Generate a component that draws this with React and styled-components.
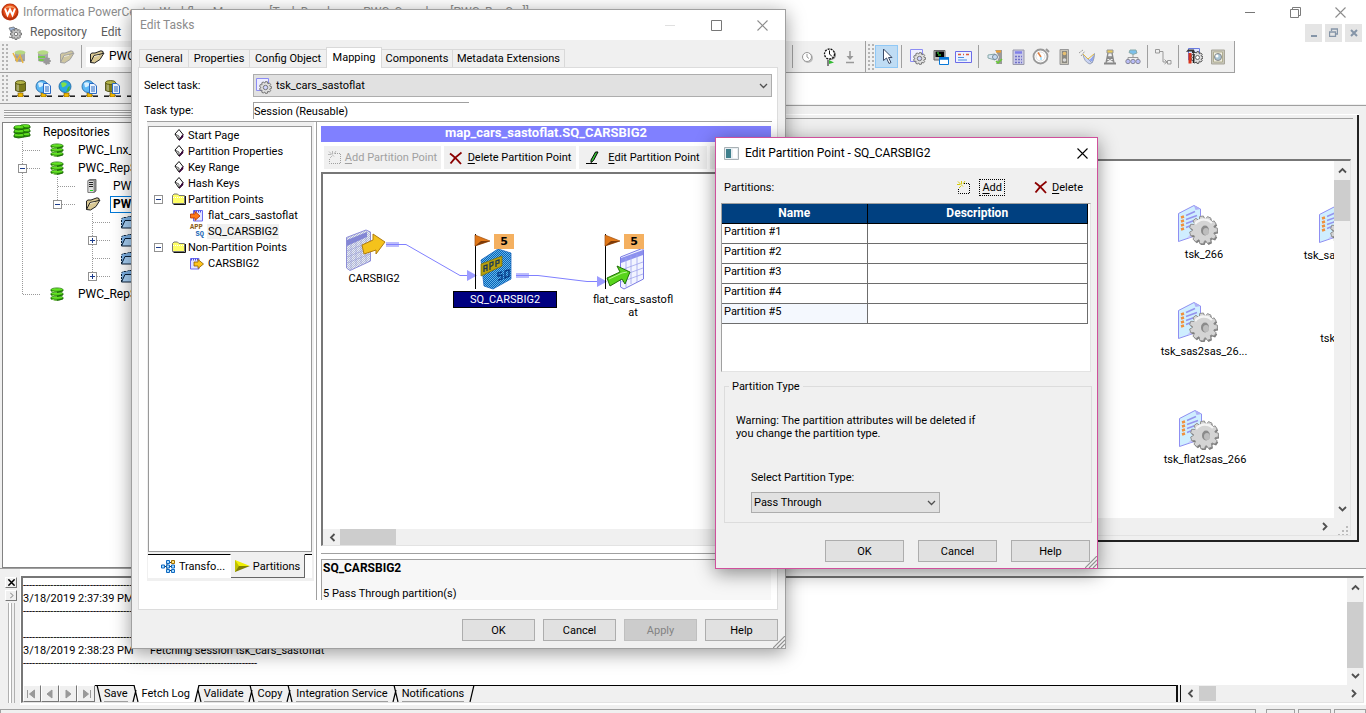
import React from 'react';
import styled, { createGlobalStyle, css } from 'styled-components';

const GlobalStyle = createGlobalStyle`
  *, *::before, *::after { box-sizing: border-box; }
  body {
    margin: 0;
    background: #fff;
    color: #000;
    font: 11px/13px Roboto, "Liberation Sans", sans-serif;
    overflow: hidden;
  }
  button, select, input { font: inherit; color: inherit; }
  button { padding: 0; border: 0; background: none; white-space: nowrap; }
  svg { display: block; flex: none; }
  u { text-underline-offset: 2px; }
`;

const FACE = '#f0f0f0';
const SHADE = '#a0a0a0';

/* ---------- drawings ---------- */

function gearPath(cx, cy, outer, inner, teeth, squash = 1) {
  const pts = [];
  const step = (Math.PI * 2) / teeth;
  for (let i = 0; i < teeth; i += 1) {
    const a = i * step;
    [[-0.42, inner], [-0.24, outer], [0.24, outer], [0.42, inner]].forEach(([k, r]) => {
      const x = cx + Math.cos(a + k * step) * r * squash;
      const y = cy + Math.sin(a + k * step) * r;
      pts.push(`${x.toFixed(2)} ${y.toFixed(2)}`);
    });
  }
  return `M${pts.join('L')}Z`;
}

const Svg = ({ w = 16, h = w, children, ...rest }) => (
  <svg width={w} height={h} viewBox={`0 0 ${w} ${h}`} fill="none" aria-hidden="true" {...rest}>
    {children}
  </svg>
);

const Logo = () => (
  <Svg w={18}>
    <circle cx="9" cy="9" r="8.5" fill="#b8310c" />
    <circle cx="9" cy="8" r="6.8" fill="#e8501a" />
    <path d="M3 5.5Q9 0 15 5.5Q9 3.500 3 5.500Z" fill="#f7a36a" />
    <path d="M4 5.500L6.500 12L9 6.500L11.500 12L14 5.500" stroke="#fff" strokeWidth="2" />
  </Svg>
);

const GearMini = () => (
  <Svg w={14}>
    <path d="M1 2L6 1L8 4L3 6Z" fill="#9db4d8" stroke="#666" strokeWidth=".7" />
    <path d={gearPath(8, 8, 5.5, 4, 8)} fill="#c4c4c4" stroke="#555" strokeWidth=".8" />
    <circle cx="8" cy="8" r="1.700" fill="#fff" stroke="#555" strokeWidth=".7" />
    <path d="M1 11L5 12" stroke="#777" />
  </Svg>
);

const Cylinder = ({ x = 0, y = 0, top, side, edge }) => (
  <g transform={`translate(${x} ${y})`}>
    <path d="M.5 2.500V10.500Q5.500 13.500 10.500 10.500V2.500Z" fill={side} stroke={edge} strokeWidth=".8" />
    <path d="M1.500 3V10.500L4 11.300V4Z" fill="#fff" opacity=".35" />
    <ellipse cx="5.500" cy="2.500" rx="5" ry="2" fill={top} stroke={edge} strokeWidth=".8" />
  </g>
);

const GreenDb = () => (
  <Svg w={14}>
    {[9, 5, 1].map((y) => (
      <g key={y}>
        <path d={`M1 ${y + 2}V${y + 3}Q7 ${y + 6} 13 ${y + 3}V${y + 2}Z`} fill="#2f9d0c" stroke="#145c02" strokeWidth=".8" />
        <path d={`M2 ${y + 3}Q4 ${y + 4} 7 ${y + 4}`} stroke="#b6ff7a" />
        <ellipse cx="7" cy={y + 1.6} rx="6" ry="1.700" fill="#62e321" stroke="#1b7304" strokeWidth=".7" />
      </g>
    ))}
  </Svg>
);

const GreenDbGroup = () => (
  <Svg w={18} h={16}>
    {[[6, 0], [0, 1]].map(([x, dy]) => [9, 5, 1].map((y) => (
      <g key={`${x}-${y}`} transform={`translate(${x} ${dy})`}>
        <path d={`M1 ${y + 1}V${y + 3}Q5 ${y + 5} 11 ${y + 3}V${y + 1}Z`} fill="#2f9d0c" stroke="#145c02" strokeWidth=".8" />
        <ellipse cx="6" cy={y + 1} rx="5" ry="1.600" fill="#62e321" stroke="#1b7304" strokeWidth=".6" />
      </g>
    )))}
  </Svg>
);

const Server = () => (
  <Svg w={14}>
    <path d="M3 1.500L5 .500H11V12L9 13.500H3Z" fill="#9a9a9a" stroke="#555" strokeWidth=".8" />
    <path d="M3 1.500H9V13.500H3Z" fill="#dcdcdc" stroke="#666" strokeWidth=".6" />
    <path d="M4 3.500H8M4 5.500H8M4 7.500H8" stroke="#222" />
    <path d="M5 11.500H8" stroke="#1fe01f" />
  </Svg>
);

const OpenFolder = ({ fill = '#d9c893', line = '#222' }) => (
  <Svg w={16} h={14}>
    <path d="M1.500 12.500V4L3 3H6L12 .800L14 1.500V4" fill={fill} stroke={line} />
    <path d="M1.500 12.500L5 5.500L10 4.500L15 3L11 9.500L5.500 13Z" fill={fill} stroke={line} />
    <path d="M5 6.500L10 5.300" stroke="#fff" opacity=".6" />
  </Svg>
);

const BlueFolder = () => (
  <Svg w={16} h={14}>
    <path d="M1.500 13V4L3 2.500H7L8 1.500H15" fill="#7fb4e8" stroke="#0a2038" strokeDasharray="2 1" />
    <path d="M1.500 13L5 5.500H16V13Z" fill="#a9d2f7" stroke="#0a2038" />
  </Svg>
);

const YellowFolder = () => (
  <Svg w={14} h={12}>
    <path d="M.500 10.500V2.500L2 1H5.500L7 2.500H12.500V10.500Z" fill="#ffff66" stroke="#777" />
    <path d="M1 4.500H12" stroke="#fff" strokeDasharray="1 1" />
    <path d="M1.500 11.500H13.500V3" stroke="#111" />
  </Svg>
);

const PageMark = () => (
  <Svg w={10} h={12}>
    <path d="M1 5L5 .500L9 5.500L5 11Z" fill="#fff" stroke="#111" />
    <path d="M5 11L9 5.500V8L5.500 11.500Z" fill="#400040" stroke="#300030" strokeWidth=".6" />
    <path d="M1 5L5 7V11Z" fill="#ddd" stroke="#111" strokeWidth=".6" />
  </Svg>
);

const SheetArrow = ({ arrow, edge, flip }) => (
  <Svg w={14} h={13}>
    <path d={flip ? 'M.500 1.500H9V12H.500Z' : 'M3.500 1.500H12.500V12H3.500Z'} fill="#e4e4ff" stroke="#6a6af0" />
    <path d={flip ? 'M1 2.500H9' : 'M4 2.500H12'} stroke="#4a4ae0" strokeWidth="2" strokeDasharray="1 1" />
    <path d={flip ? 'M4 5H8V2.500L13.500 7L8 11.500V9H4Z' : 'M.500 5H5V2.500L10 7L5 11.500V9H.500Z'} fill={arrow} stroke={edge} strokeWidth=".8" />
  </Svg>
);

const AppSqWrap = styled.span`
  display: flex;
  flex-direction: column;
  width: 14px;
  font: bold 7px/7px "Liberation Mono", monospace;
  color: #8a5a14;
  & > i { font-style: normal; align-self: flex-end; color: #1464b4; }
`;
const AppSq = () => <AppSqWrap aria-hidden="true">APP<i>SQ</i></AppSqWrap>;

const TaskGear = ({ size = 16 }) => (
  <svg width={size} height={size} viewBox="0 0 16 16" fill="none" aria-hidden="true">
    <path d="M.500 .500H12.500V12.500H.500Z" fill="#eef" stroke="#8c8cf4" />
    <path d={gearPath(9.5, 9.5, 6, 4.6, 9)} fill="#dedede" stroke="#6b6b6b" strokeWidth=".9" />
    <circle cx="9.500" cy="9.500" r="2.200" fill="#cfd4ff" stroke="#777" />
  </svg>
);

const SessionTask = () => (
  <Svg w={41} h={41}>
    <path d="M1.500 9.500L17 1.500L23.500 5V30L1.500 37.500Z" fill="#cfeeff" stroke="#8f8ff2" />
    <path d="M10 34L23 20V31Z" fill="#c6c6fb" />
    <path d="M17 1.500L18.500 6L23.500 5Z" fill="#aeb0f6" />
    <path d="M9 11.500L18 7.500M9 15.500L20 11.500M9 19.500L20 15.500M9 23.500L15 21" stroke="#9494ee" strokeWidth="1.500" />
    <path d="M4 13.500L7 12.500M4 17.500L7 16.500M4 21.500L7 20.500M4 25.500L7 24.500" stroke="#f0903c" strokeWidth="2.400" />
    <path d={gearPath(27.5, 27.5, 14, 11, 11)} fill="#7d7d7d" />
    <path d={gearPath(26.5, 26, 14, 11, 11)} fill="#d4d4d4" stroke="#909090" />
    <path d="M18 20A11 11 0 0 1 35 19" stroke="#f4f4f4" strokeWidth="2.500" />
    <ellipse cx="28" cy="26.500" rx="4" ry="5" fill="#8b8b8b" />
    <ellipse cx="29" cy="27.500" rx="3" ry="3.500" fill="#bdbdbd" />
  </Svg>
);

const NetDb = ({ kind }) => (
  <Svg w={17} h={17}>
    <path d="M0 15.500H17" stroke="#777" strokeWidth="1" />
    <path d="M0 16.500H5M12 16.500H17" stroke="#222" />
    <rect x="6" y="13" width="5" height="4" fill="#f2b800" stroke="#6b5200" strokeWidth=".6" />
    {kind === 'db' && <Cylinder x={3} y={0} top="#b5b548" side="#7c7c1c" edge="#44440a" />}
    {kind === 'dbpage' && <Cylinder x={1} y={0} top="#b5b548" side="#7c7c1c" edge="#44440a" />}
    {kind.startsWith('globe') && (
      <g>
        <circle cx="7" cy="6.500" r="6" fill={kind === 'globe' ? '#2aa7e0' : '#5cb8f5'} stroke="#1a5fa0" strokeWidth=".8" />
        <path d="M3 3Q7 1 9 4Q7 8 4 7Z" fill={kind === 'globe' ? '#7ee04c' : '#d8f0ff'} />
        {kind === 'globe' && <path d="M10 7L12 6L11 11L8 12Z" fill="#3fb83a" />}
      </g>
    )}
    {kind.includes('page') && (
      <path d="M8.500 3.500H13L15.500 6V13.500H8.500Z M10 7H14M10 9H14M10 11H14" fill="#eaf4ff" stroke="#2b6bc4" />
    )}
  </Svg>
);

const DisabledDb = ({ kind }) => (
  <Svg w={17} h={16}>
    <path d="M3 3V12Q8 14 13 12V3Z" fill="#a8a8a8" />
    <ellipse cx="8" cy="3.500" rx="5.500" ry="2.200" fill="#b5d884" />
    <path d="M3 8H10M4 11H12" stroke={kind === 'star' ? '#999' : '#63d42c'} strokeWidth="1.500" />
    {kind === 'star' ? (
      <path d="M1 4L5 12L8 6L11 14" stroke="#eab53e" strokeWidth="1.500" />
    ) : (
      <path d={gearPath(12, 12, 4, 3, 7)} fill="#999" />
    )}
  </Svg>
);

const RedX = () => (
  <Svg w={14} h={14}>
    <path d="M1 2.500Q6 6 12 13M12.500 1.500Q6 6 1.500 12.500" stroke="#8b0000" strokeWidth="1.800" />
  </Svg>
);

const NewBox = ({ off }) => (
  <Svg w={14} h={13}>
    <path d="M7 2.500H12.500V12.500H1.500V7" stroke={off ? '#a0a0a0' : '#000'} strokeDasharray="1 1" />
    <path d="M1 .500L6 5.500M4.500 0V3M8 0L6 3M0 3.500H3M2 7L4 5" stroke={off ? '#b8b8b8' : '#d6cc10'} />
  </Svg>
);

const Pencil = () => (
  <Svg w={14} h={13}>
    <path d="M0 12.500H11" stroke="#000" />
    <path d="M5 9L9.500 1H12L7.500 9.500L5 11.500Z" fill="#37c437" stroke="#000" strokeWidth="1" />
  </Svg>
);

const Chevron = ({ dir = 'down', size = 9, color = '#505050', weight = 1.3 }) => {
  const d = {
    down: 'M1 3L4.500 6.500L8 3',
    up: 'M1 6.500L4.500 3L8 6.500',
    left: 'M6.500 1L3 4.500L6.500 8',
    right: 'M3 1L6.500 4.500L3 8',
  }[dir];
  return (
    <svg width={size} height={size} viewBox="0 0 9 9" fill="none" aria-hidden="true">
      <path d={d} stroke={color} strokeWidth={weight} />
    </svg>
  );
};

const Close = ({ size = 11, color = '#8c8c8c', weight = 1.1 }) => (
  <svg width={size} height={size} viewBox="0 0 11 11" fill="none" aria-hidden="true">
    <path d="M.500 .500L10.500 10.500M10.500 .500L.500 10.500" stroke={color} strokeWidth={weight} />
  </svg>
);

const Sign = ({ plus }) => (
  <Svg w={7}>
    <path d={plus ? 'M1 3.500H6M3.500 1V6' : 'M1 3.500H6'} stroke="#1c3c8c" />
  </Svg>
);

const Restore = ({ color = '#7c7c7c' }) => (
  <Svg w={11}>
    <path d="M.500 2.500H8.500V10.500H.500Z M2.500 2V.500H10.500V8.500H9" stroke={color} />
  </Svg>
);

const Grip = () => (
  <Svg w={12}>
    <path d="M12 0L0 12M12 4L4 12M12 8L8 12" stroke="#909090" strokeWidth="1.200" />
  </Svg>
);

const paletteDrawings = {
  task: <TaskGear />,
  command: (
    <Svg>
      <path d="M1 1.500H12V11H1Z" fill="#bbb" stroke="#666" />
      <path d="M2.500 2.500H11V8H2.500Z" fill="#000" />
      <path d="M4 4H6M5 6H8" stroke="#4f4" />
      <path d="M6.500 8.500H15.500V15.500H6.500Z" fill="#fff" stroke="#0878d8" />
      <path d="M6 9.500H16" stroke="#0878d8" strokeWidth="2.500" />
    </Svg>
  ),
  mail: (
    <Svg w={17} h={14}>
      <path d="M.500 1.500H16.500V12.500H.500Z" fill="#eef2ff" stroke="#6c6ce8" />
      <path d="M3 4.500H6M8 4.500H9M11 4.500H14" stroke="#e05a3a" strokeWidth="1.500" />
      <path d="M3 7.500H9M3 10H12" stroke="#4a90e0" />
    </Svg>
  ),
  decision: (
    <Svg>
      <path d="M8 1H15V15H9L12 8Z" fill="#9a9a9a" />
      <path d="M9 2.500H14" stroke="#f0a030" strokeWidth="2" />
      <path d="M1 6L8 5V11L1 9Z" fill="#dbe7f3" stroke="#8aa" />
      <circle cx="8" cy="8" r="2.500" fill="#c7dcf2" stroke="#789" />
      <path d="M9 12L11 14L15 10" stroke="#6c3" strokeWidth="1.500" />
    </Svg>
  ),
  calc: (
    <Svg>
      <path d="M3 1H14V15.500H3Z" fill="#c9c9e8" stroke="#9a9aaa" />
      <path d="M5 3.500H12" stroke="#8080e8" strokeWidth="2.500" />
      <path d="M5 7.500H12M5 10.500H12M5 13.500H12" stroke="#7070c8" strokeWidth="1.600" strokeDasharray="2 1" />
    </Svg>
  ),
  timer: (
    <Svg w={18}>
      <circle cx="8.500" cy="8.500" r="7" fill="#fff" stroke="#999" strokeWidth="1.800" />
      <circle cx="8.500" cy="8.500" r="4.500" stroke="#ddd" />
      <path d="M6 4.500L9 9" stroke="#e08040" strokeWidth="1.500" />
      <path d="M9 9V12" stroke="#6cf" />
      <path d="M14 1L17 4" stroke="#999" strokeWidth="2" />
    </Svg>
  ),
  light: (
    <Svg>
      <path d="M4 .500H12.500V15.500H4Z" fill="#c8c4b8" stroke="#999" />
      <path d="M6 2H11V14H6Z" fill="#8a8880" />
      <circle cx="8.500" cy="4.500" r="1.800" fill="#e8c070" />
      <circle cx="8.500" cy="11" r="1.800" fill="#d8d8d8" />
    </Svg>
  ),
  dish: (
    <Svg>
      <path d="M0 4L4 1M2 7L6 2" stroke="#999" strokeDasharray="2 1" />
      <path d="M4 5L13 14L15.500 4.500Q15 14 11 15Q5 13 4 5Z" fill="#c9d3f4" stroke="#9aa4b8" />
      <path d="M4 5L9 10L15 5" stroke="#e0b840" />
      <path d="M10 11Q13 9 14.500 6L13.500 13Z" fill="#8fa4f0" />
    </Svg>
  ),
  tower: (
    <Svg>
      <path d="M5 1H11V4H5Z" fill="#e8c95a" stroke="#999" />
      <path d="M6 4L4 14M10 4L12 14M5 8H11M5 12L11 8M5 8L11 12" stroke="#888" strokeWidth="1.300" />
      <path d="M2 14.500H14" stroke="#888" strokeWidth="2" />
    </Svg>
  ),
  worklet: (
    <Svg>
      <path d="M5 1H11L12 4L8 5.500L4 3.500Z" fill="#7cc0ec" stroke="#8aa" />
      <path d="M8 6V9M3 10V8.500H13V10" stroke="#999" />
      <circle cx="3" cy="12.500" r="2.200" fill="#b9bdf6" stroke="#889" />
      <circle cx="8" cy="12.500" r="2.200" fill="#b9bdf6" stroke="#889" />
      <circle cx="13" cy="12.500" r="2.200" fill="#b9bdf6" stroke="#889" />
    </Svg>
  ),
  link: (
    <Svg w={17} h={17}>
      <path d="M.500 1.500H4.500V5H.500Z M12.500 12.500H16V16H12.500Z" stroke="#999" />
      <path d="M4.500 3.500H8V14H12M9.500 11.500L12 14L9.500 16" stroke="#999" />
    </Svg>
  ),
  tools: (
    <Svg w={17}>
      <path d="M2.500 .500H13.500V12H2.500Z" fill="#dfe6ff" stroke="#6a7ae0" />
      <path d={gearPath(11, 9.5, 6, 4.6, 9)} fill="#dedede" stroke="#444" strokeWidth=".9" />
      <circle cx="11.500" cy="9.500" r="2" fill="#fff" stroke="#666" />
      <path d="M0 4L2 1.500H8L9 5H6V3.500H3Z" fill="#333" />
      <path d="M4 5V15.500" stroke="#d8341c" strokeWidth="3" />
      <path d="M8 6L7.500 15" stroke="#222" strokeWidth="1.500" />
    </Svg>
  ),
  monitor: (
    <Svg>
      <path d="M1.500 1H14.500V15H1.500Z" fill="#c9c7bc" stroke="#a8a69a" />
      <path d="M3.500 3H12.500V13H3.500Z" fill="#f2f0e4" stroke="#b0ae90" />
      <circle cx="8" cy="8" r="3.500" fill="#a8c4d4" stroke="#888" />
      <circle cx="7" cy="7" r="1.500" fill="#fff" />
    </Svg>
  ),
  clock: (
    <Svg w={14}>
      <circle cx="8" cy="8" r="5" fill="#bbb" />
      <circle cx="7" cy="7" r="4.500" fill="#fff" stroke="#999" />
      <path d="M7 4V7L9 8.500" stroke="#999" />
    </Svg>
  ),
  clockRun: (
    <Svg w={14} h={18}>
      <circle cx="8" cy="7" r="5" fill="#888" />
      <circle cx="6.500" cy="6" r="5" fill="#fff" stroke="#111" strokeDasharray="2 1" strokeWidth="1.300" />
      <path d="M6.500 2.500V6L9 8.500" stroke="#111" />
      <path d="M5 12V18" stroke="#111" />
      <path d="M6 12L11 14.500L6 16Z" fill="#3b3" />
    </Svg>
  ),
  download: (
    <Svg w={10} h={14}>
      <path d="M5 1V8M1 12.500H9" stroke="#999" strokeWidth="1.600" />
      <path d="M1.500 6H8.500L5 10Z" fill="#999" />
    </Svg>
  ),
  pointer: (
    <Svg w={12} h={17}>
      <path d="M2.500 1V12.500L5.500 10L8 15.500L10 14.500L7.500 9.500H11Z" fill="#fff" stroke="#3c4a66" />
    </Svg>
  ),
};

/* ---------- application frame ---------- */

const Frame = styled.main`
  display: flex;
  flex-direction: column;
  min-height: 100vh;
  position: relative;
  overflow: hidden;
`;

const CaptionBar = styled.header`
  display: flex;
  align-items: center;
  height: 24px;
  padding: 0 20px 0 1px;
  font-size: 12px;
  color: #8c8c8c;
`;

const CaptionTitle = styled.h1`
  flex: 1;
  margin: 0 0 0 4px;
  font: inherit;
  white-space: nowrap;
`;

const CaptionButtons = styled.div`
  display: flex;
  align-items: center;
  gap: ${(p) => p.$gap}px;
`;

const CaptionButton = styled.button`
  display: grid;
  place-items: center;
  width: 12px;
  height: 14px;
`;

const Dash = styled.span`
  width: 10px;
  height: 1px;
  background: ${(p) => p.$color};
`;

const MenuBar = styled.nav`
  display: flex;
  align-items: center;
  gap: 14px;
  height: 17px;
  padding: 0 4px 0 8px;
  font-size: 12px;
`;

const MenuItem = styled.button`
  color: #5c5c5c;
  ${(p) => p.$first && css`margin-left: -6px;`}
`;

const MdiButtons = styled.div`
  display: flex;
  gap: 3px;
  margin-left: auto;
`;

const MdiButton = styled.button`
  display: grid;
  place-items: center;
  width: 17px;
  height: 18px;
  background: #e5e5e5;
  color: #8595a8;
`;

const ToolRow = styled.div`
  display: flex;
  height: ${(p) => p.$height}px;
`;

const Toolbar = styled.div`
  display: flex;
  align-items: center;
  flex: 0 0 ${(p) => p.$width}px;
  padding-left: 2px;
  background: ${FACE};
  border-bottom: 1px solid ${SHADE};
  border-right: 1px solid ${SHADE};
`;

const ToolGrip = styled.span`
  width: 7px;
  height: 26px;
  background-image: radial-gradient(circle at 1px 1px, #b4b4b4 1px, transparent 1px);
  background-size: 4px 4px;
`;

const ToolButton = styled.button`
  display: grid;
  place-items: center;
  width: ${(p) => p.$width || 23}px;
  height: 23px;
  border: 1px solid ${(p) => (p.$on ? '#90c8f6' : 'transparent')};
  background: ${(p) => (p.$on ? '#bfdcf4' : 'transparent')};
`;

const ToolRule = styled.span`
  width: 1px;
  height: 23px;
  margin: 0 ${(p) => p.$after || 4}px 0 3px;
  background: ${SHADE};
`;

const FolderBox = styled.div`
  display: flex;
  align-items: center;
  gap: 4px;
  width: 200px;
  height: 20px;
  padding-left: 3px;
  background: #fff;
  font-size: 12px;
`;

const RightTools = styled.div`
  display: flex;
  align-items: center;
  margin-left: auto;
  padding-right: 7px;
`;

const Workspace = styled.section`
  display: flex;
  flex: 1;
  background: ${FACE};
  border-bottom: 1px solid ${SHADE};
`;

const Dock = styled.aside`
  display: flex;
  flex-direction: column;
  flex: 0 0 300px;
  padding: 6px 2px 0 2px;
`;

const DockBar = styled.span`
  flex: none;
  height: 3px;
  margin: 0 2px 2px;
  border-top: 1px solid ${SHADE};
  border-bottom: 1px solid ${SHADE};
  background: #fff;
`;

const RepoTree = styled.ul`
  flex: 1;
  margin: 2px 0 0;
  padding: 0 0 0 2px;
  list-style: none;
  background: #fff;
  border: 1px solid #828282;
  font-size: 12px;
`;

const RepoRow = styled.li`
  display: flex;
  align-items: center;
  height: 18px;
  white-space: nowrap;
`;

const Guide = styled.span`
  display: grid;
  grid-template: 100% / 17px 18px;
  align-items: center;
  width: 35px;
  height: 18px;
  background:
    ${(p) => (p.$v ? `repeating-linear-gradient(#999 0 1px, transparent 1px 2px) 17px 0 / 1px ${p.$v === 'half' ? '9px' : '100%'} no-repeat` : 'none')}
    ${(p) => (p.$h ? ', repeating-linear-gradient(90deg, #999 0 1px, transparent 1px 2px) 18px 9px / 17px 1px no-repeat' : '')};
`;

const Expander = styled.button`
  display: grid;
  place-items: center;
  grid-column: 1 / 3;
  width: 9px;
  height: 9px;
  margin-left: ${(p) => p.$indent || 0}px;
  border: 1px solid #919191;
  background: #fff;
`;

const RepoIcon = styled.span`
  display: flex;
  flex: 0 0 38px;
  padding-left: ${(p) => (p.$root ? 8 : 10)}px;
`;

const RepoName = styled.span`
  font-weight: ${(p) => (p.$active ? 'bold' : 'normal')};
  ${(p) => p.$active && css`
    height: 17px;
    line-height: 15px;
    margin-left: -3px;
    padding: 0 2px;
    border: 1px solid #0078d7;
  `}
`;

const repoRows = [
  { guides: [], icon: <GreenDbGroup />, name: 'Repositories' },
  { guides: [['full', true]], icon: <GreenDb />, name: 'PWC_Lnx_RepSrv' },
  { guides: [['full', true, '-']], icon: <GreenDb />, name: 'PWC_RepSrv' },
  { guides: [['full'], ['full', true]], icon: <Server />, name: 'PWC_IntSrv' },
  { guides: [['full'], ['half', true, '-']], icon: <OpenFolder />, name: 'PWC_Samples', active: true },
  { guides: [['full'], [''], ['full', true]], icon: <BlueFolder />, name: 'Tasks' },
  { guides: [['full'], [''], ['full', true, '+']], icon: <BlueFolder />, name: 'Sessions' },
  { guides: [['full'], [''], ['full', true]], icon: <BlueFolder />, name: 'Worklets' },
  { guides: [['full'], [''], ['half', true, '+']], icon: <BlueFolder />, name: 'Workflows' },
  { guides: [['half', true]], icon: <GreenDb />, name: 'PWC_RepSrv2' },
];

const MdiArea = styled.div`
  display: flex;
  flex: 1;
  padding: 9px 7px 26px 0;
  margin-top: 1px;
  border-top: 1px solid ${SHADE};
`;

const MdiChild = styled.div`
  display: flex;
  flex-direction: column;
  flex: 1;
  min-width: 0;
  padding: 3px 4px 4px 0;
  border-right: 2px solid #222;
  border-bottom: 2px solid #222;
  box-shadow: 0 -1px 0 #fff;
`;

const ChildHead = styled.div`
  height: 41px;
  border-top: 1px solid ${SHADE};
`;

const ChildView = styled.div`
  display: grid;
  grid-template: 1fr 17px / 1fr 16px;
  flex: 1;
  min-height: 0;
  margin-right: 2px;
  border: 1px solid #e3e3e3;
  border-top: 2px solid #777;
`;

const TaskCanvas = styled.div`
  position: relative;
  overflow: hidden;
  background: #fff;
`;

const TaskNode = styled.figure`
  position: absolute;
  left: ${(p) => p.$x}px;
  top: ${(p) => p.$y}px;
  display: flex;
  flex-direction: column;
  align-items: center;
  gap: 3px;
  width: 100px;
  margin: 0;
  white-space: nowrap;
  & > svg { margin-right: 14px; }
  & > figcaption { height: 13px; }
`;

const VScroll = styled.div`
  display: flex;
  flex-direction: column;
  align-items: center;
  padding: 5px 0;
  background: ${FACE};
`;

const HScroll = styled.div`
  display: flex;
  align-items: center;
  padding: 0 5px;
  background: ${FACE};
`;

const Thumb = styled.span`
  align-self: stretch;
  flex: 0 0 ${(p) => p.$length}px;
  margin: ${(p) => p.$margin || 0};
  background: #cdcdcd;
`;

const Push = styled.span`
  flex: 1;
`;

const Corner = styled.span`
  background: radial-gradient(circle at 1px 1px, #bbb 1px, transparent 1px) 0 0 / 4px 4px;
  clip-path: polygon(100% 20%, 100% 100%, 20% 100%);
`;

/* ---------- output window ---------- */

const Output = styled.section`
  display: flex;
  height: 136px;
  padding: 7px 2px 2px 5px;
  background: linear-gradient(90deg, ${FACE} 20px, #fff 20px);
`;

const OutputHandle = styled.div`
  display: flex;
  flex-direction: column;
  gap: 2px;
  width: 16px;
  padding-top: 1px;
`;

const TinyButton = styled.button`
  display: grid;
  place-items: center;
  width: 12px;
  height: 11px;
  border: 1px solid;
  border-color: #fff #777 #777 #fff;
  background: ${FACE};
`;

const HandleBars = styled.span`
  flex: 1;
  width: 7px;
  margin-left: 3px;
  border: solid #b0b0b0;
  border-width: 0 1px;
  background: linear-gradient(90deg, #fff 2px, #b0b0b0 2px 3px, ${FACE} 3px);
`;

const OutputBody = styled.div`
  display: grid;
  grid-template: 1fr 17px / 1fr 16px;
  flex: 1;
  min-width: 0;
  border: 1px solid #e3e3e3;
  border-top: 2px solid #777;
  border-left: 2px solid #777;
`;

const Log = styled.div`
  overflow: hidden;
  padding-top: 1px;
  white-space: pre;
  background: #fff;
`;

const LogLine = styled.div`
  height: 13px;
  line-height: 13px;
`;

const LogTime = styled.span`
  display: inline-block;
  width: 127px;
`;

const TabStrip = styled.div`
  grid-column: 1 / 3;
  display: flex;
  background: ${FACE};
`;

const SheetTabs = styled.div`
  display: flex;
  flex: 1;
  border-right: 2px solid #111;
`;

const PageButton = styled.button`
  display: grid;
  place-items: center;
  width: 18px;
  border: 1px solid;
  border-color: #fff #777 #777 #fff;
  background: ${FACE};
`;

const SheetTab = styled.button`
  height: 17px;
  border-top: 1px solid ${(p) => (p.$on ? '#fff' : '#000')};
  border-bottom: 1px solid ${(p) => (p.$on ? '#fff' : SHADE)};
  background: ${(p) => (p.$on ? '#fff' : FACE)};
`;

const SheetRest = styled.span`
  flex: 1;
  border-top: 1px solid #000;
`;

const Slant = ({ left, right }) => {
  const w = left ? 14 : 9;
  let d = 'M6 0L10 17M8 5L5 17M0 .500H6';
  if (left === 'on') d = 'M9 0L5 17M8 5L11 17M9 .500H14';
  else if (!left) d = 'M2 0L6 17M0 .500H9';
  else if (!right) d = 'M10 0L6 17M0 .500H14';
  return (
    <svg width={w} height="17" viewBox={`0 0 ${w} 17`} aria-hidden="true">
      {left === 'on' && <path d="M0 0H9L5 17H0Z" fill="#fff" />}
      {right === 'on' && <path d="M6 0H14V17H10Z" fill="#fff" />}
      <path d={d} stroke="#000" fill="none" strokeWidth="1.200" />
      {left === 'off' && right === 'off' && <path d="M6 .500H14" stroke="#000" />}
    </svg>
  );
};

const BottomScroll = styled(HScroll)`
  flex: 0 0 183px;
  margin-left: 2px;
  border-left: 1px solid #111;
`;

const StatusBar = styled.footer`
  display: flex;
  gap: 3px;
  height: 8px;
  padding-top: 4px;
  background: ${FACE};
`;

const StatusPane = styled.span`
  flex: ${(p) => p.$flex};
  margin-right: ${(p) => p.$after || 0}px;
  border: 1px solid ${SHADE};
  border-bottom: 0;
`;

/* ---------- dialogs ---------- */

const Dialog = styled.section`
  position: absolute;
  left: ${(p) => p.$x}px;
  top: ${(p) => p.$y}px;
  display: flex;
  flex-direction: column;
  width: ${(p) => p.$w}px;
  height: ${(p) => p.$h}px;
  border: 1px solid ${(p) => p.$edge};
  background: ${FACE};
  box-shadow: 0 4px 18px rgba(0, 0, 0, ${(p) => p.$depth});
`;

const DialogCaption = styled.header`
  display: flex;
  align-items: center;
  gap: 6px;
  flex: 0 0 ${(p) => p.$h}px;
  padding: 0 ${(p) => p.$right}px 0 8px;
  background: #fff;
  font-size: 12px;
  color: ${(p) => (p.$dim ? '#8c8c8c' : '#000')};
`;

const DialogTitle = styled.h2`
  flex: 1;
  margin: 0;
  font: inherit;
`;

const PageTabs = styled.div`
  display: flex;
  align-items: flex-end;
  height: 27px;
  padding-left: 8px;
`;

const PageTab = styled.button`
  width: ${(p) => p.$w}px;
  height: ${(p) => (p.$on ? 21 : 18)}px;
  margin-left: -1px;
  margin-bottom: ${(p) => (p.$on ? -1 : 0)}px;
  padding-bottom: ${(p) => (p.$on ? 2 : 0)}px;
  position: relative;
  border: 1px solid #d9d9d9;
  border-bottom: 0;
  background: ${(p) => (p.$on ? '#fff' : FACE)};
`;

const TabPage = styled.div`
  display: flex;
  flex-direction: column;
  flex: 1;
  min-height: 0;
  margin: 0 7px 0 6px;
  padding: 6px 5px 9px 8px;
  border: 1px solid #dcdcdc;
  background: #fff;
`;

const Fields = styled.div`
  display: grid;
  grid-template-columns: 109px 1fr;
  grid-template-rows: 23px 17px;
  row-gap: 5px;
  align-items: center;
  padding: 0 0 2px 5px;
  margin-left: -8px;
`;

const ComboWrap = styled.div`
  display: grid;
  grid-template-columns: 1fr 18px;
  align-items: center;
  width: ${(p) => p.$w || 'auto'};
  height: ${(p) => p.$h}px;
  & > svg, & > select { grid-row: 1; }
  & > select { grid-column: 1 / 3; }
  & > svg { pointer-events: none; z-index: 1; }
  & > svg:last-child { grid-column: 2; margin-left: 5px; }
  & > svg:first-child { grid-column: 1; margin-left: 3px; }
`;

const Combo = styled.select`
  appearance: none;
  width: 100%;
  height: 100%;
  padding: 0 20px 0 ${(p) => p.$pad}px;
  border: 1px solid #adadad;
  border-radius: 0;
  background: #e1e1e1;
`;

const ReadOnly = styled.input`
  width: 216px;
  height: 17px;
  padding: 0;
  border: 1px solid ${SHADE};
  border-right: 0;
  border-bottom: 0;
  border-radius: 0;
  background: #fff;
`;

const Panes = styled.div`
  display: flex;
  flex: 1;
  min-height: 0;
  border-top: 1px solid ${SHADE};
`;

const TreePane = styled.div`
  display: flex;
  flex-direction: column;
  flex: 0 0 167px;
  margin-bottom: 19px;
  padding: 4px 2px 3px 1px;
  background: ${FACE};
`;

const MapTree = styled.ul`
  flex: 1;
  margin: 0;
  padding: 0;
  list-style: none;
  background: #fff;
  border: 1px solid #999;
`;

const MapRow = styled.li`
  display: flex;
  align-items: center;
  height: 16px;
  padding-left: 5px;
  white-space: nowrap;
`;

const MapIcon = styled.span`
  display: flex;
  justify-content: ${(p) => (p.$leaf ? 'flex-start' : 'center')};
  flex: 0 0 17px;
  margin-left: ${(p) => p.$gap}px;
`;

const MapName = styled.span`
  height: 15px;
  line-height: 15px;
  padding: 0 1px;
  background: ${(p) => (p.$on ? FACE : 'transparent')};
`;

const mapRows = [
  { icon: <PageMark />, name: 'Start Page' },
  { icon: <PageMark />, name: 'Partition Properties' },
  { icon: <PageMark />, name: 'Key Range' },
  { icon: <PageMark />, name: 'Hash Keys' },
  { icon: <YellowFolder />, name: 'Partition Points', branch: true },
  { icon: <SheetArrow arrow="#ff7a1a" edge="#b03000" />, name: 'flat_cars_sastoflat', leaf: true },
  { icon: <AppSq />, name: 'SQ_CARSBIG2', leaf: true, on: true },
  { icon: <YellowFolder />, name: 'Non-Partition Points', branch: true },
  { icon: <SheetArrow arrow="#ffc61a" edge="#8a5a00" flip />, name: 'CARSBIG2', leaf: true },
];

const FootTabs = styled.div`
  display: flex;
  height: 24px;
  margin-top: 2px;
  border-top: 1px solid #000;
  background: linear-gradient(90deg, transparent 156px, #fff 156px);
`;

const FootTab = styled.button`
  display: flex;
  align-items: center;
  justify-content: center;
  gap: 3px;
  width: ${(p) => p.$w}px;
  padding-left: ${(p) => (p.$on ? 0 : 8)}px;
  margin-top: -1px;
  border: solid ${(p) => (p.$on ? '#666' : '#fff')};
  border-width: 0 1px 1px 0;
  background: ${(p) => (p.$on ? FACE : '#fff')};
  border-top: 1px solid ${(p) => (p.$on ? FACE : '#000')};
`;

const MapPane = styled.div`
  display: flex;
  flex-direction: column;
  flex: 1;
  min-width: 0;
  margin-left: 2px;
  padding: 4px 1px 0 4px;
  border-left: 1px solid ${SHADE};
`;

const MapHeading = styled.h3`
  margin: 0;
  height: 16px;
  background: #8080ff;
  color: #fff;
  font: bold 13px/13px Roboto, "Liberation Sans", sans-serif;
  text-align: center;
`;

const PointBar = styled.div`
  display: flex;
  gap: 3px;
  overflow: hidden;
  padding: 4px 0 3px 3px;
`;

const PointButton = styled.button`
  display: flex;
  align-items: center;
  justify-content: center;
  gap: ${(p) => p.$gap}px;
  flex: 0 0 ${(p) => p.$w}px;
  height: 23px;
  background: ${FACE};
  color: ${(p) => (p.disabled ? '#a0a0a0' : '#000')};
`;

const Diagram = styled.div`
  position: relative;
  display: flex;
  flex: 1;
  align-items: flex-end;
  border: 1px solid #e3e3e3;
  border-top: 2px solid #777;
  border-left: 2px solid #777;
`;

const Wires = styled.svg`
  position: absolute;
  left: 0;
  top: 0;
`;

const NodeLabel = styled.span`
  position: absolute;
  left: ${(p) => p.$x}px;
  top: ${(p) => p.$y}px;
  width: ${(p) => p.$w}px;
  text-align: center;
  white-space: nowrap;
  ${(p) => p.$on && css`
    height: 17px;
    line-height: 15px;
    border: 1px solid #000;
    background: #000080;
    color: #fff;
  `}
`;

const Badge = styled.span`
  position: absolute;
  left: ${(p) => p.$x}px;
  top: ${(p) => p.$y}px;
  width: 20px;
  height: 15px;
  background: #f4b060;
  font: bold 11px/15px "DejaVu Sans", sans-serif;
  text-align: center;
`;

const DiagramScroll = styled(HScroll)`
  flex: 1;
  height: 16px;
`;

const Detail = styled.div`
  display: flex;
  flex-direction: column;
  justify-content: space-between;
  height: 41px;
  margin-top: 5px;
  padding: 2px 0 0 1px;
  border: solid ${SHADE};
  border-width: 1px 0 0 1px;
  background: #f7f7f7;
  & > b { font-size: 12px; }
`;

const PaneRule = styled.span`
  height: 1px;
  margin-top: 7px;
  background: ${SHADE};
`;

const DialogButtons = styled.div`
  display: flex;
  justify-content: flex-end;
  gap: ${(p) => p.$gap}px;
  padding: ${(p) => p.$pad};
`;

const PushButton = styled.button`
  width: ${(p) => p.$w}px;
  height: 22px;
  border: 1px solid ${(p) => (p.disabled ? '#bfbfbf' : '#adadad')};
  background: ${(p) => (p.disabled ? '#cccccc' : '#e1e1e1')};
  color: ${(p) => (p.disabled ? '#838383' : '#000')};
`;

const ResizeCorner = styled.span`
  position: absolute;
  right: 0;
  bottom: 0;
`;

/* ---------- partition dialog ---------- */

const PartHead = styled.div`
  display: flex;
  align-items: center;
  height: 35px;
  padding: 3px 13px 0 8px;
`;

const FlatButton = styled.button`
  display: flex;
  align-items: center;
  gap: ${(p) => p.$gap}px;
  margin-left: ${(p) => p.$before};
  & > span {
    padding: 0 1px;
    outline: ${(p) => (p.$focus ? '1px dotted #000' : 'none')};
    outline-offset: 1px;
  }
`;

const GridBox = styled.div`
  height: 169px;
  margin: 0 6px 0 5px;
  border: 1px solid #e3e3e3;
  border-top-color: ${SHADE};
  border-left-color: ${SHADE};
  background: #fff;
`;

const Grid = styled.table`
  width: 366px;
  border-collapse: collapse;
  table-layout: fixed;
  & col:first-child { width: 145px; }
  & th {
    height: 19px;
    padding: 1px 0 0;
    background: #004080;
    border: solid #000;
    border-width: 0 1px 1px 0;
    color: #fff;
    font-size: 12px;
  }
  & td {
    height: 20px;
    padding: 1px 2px;
    border: solid #6d6d6d;
    border-width: 0 1px 1px 0;
    vertical-align: top;
  }
  & tr:last-child td:first-child { background: #f4f8fe; }
`;

const Group = styled.fieldset`
  flex: 1;
  min-width: 0;
  margin: 8px 5px 0 8px;
  padding: 0 0 0 11px;
  border: 1px solid #dcdcdc;
  & > legend { margin-left: -7px; padding: 0 3px; }
`;

const Warning = styled.p`
  width: 250px;
  margin: 21px 0 31px;
`;

const TypeField = styled.div`
  display: flex;
  flex-direction: column;
  gap: 8px;
  padding-left: 15px;
`;

const WINDOW_TITLE = 'Informatica PowerCenter Workflow Manager - [Task Developer - PWC_Samples - [PWC_RepSrv]]';
const RULE = '-'.repeat(77);

const PALETTE = [
  ['task', 'command', 'mail'],
  ['decision', 'calc', 'timer', 'light', 'dish', 'tower', 'worklet'],
  ['link'],
  ['tools', 'monitor'],
];

function MainToolbars() {
  return (
    <>
      <ToolRow $height={32}>
        <Toolbar $width={866}>
          <ToolGrip />
          <ToolButton aria-label="Connect"><DisabledDb kind="star" /></ToolButton>
          <ToolButton aria-label="Disconnect"><DisabledDb kind="gear" /></ToolButton>
          <ToolButton aria-label="Open folder"><OpenFolder fill="#cfc6a0" line="#a0a0a0" /></ToolButton>
          <ToolRule />
          <FolderBox><OpenFolder />PWC_Samples</FolderBox>
          <RightTools>
            <ToolRule $after={2} />
            <ToolButton aria-label="Schedule">{paletteDrawings.clock}</ToolButton>
            <ToolButton aria-label="Run schedule">{paletteDrawings.clockRun}</ToolButton>
            <ToolButton $width={17} aria-label="Import">{paletteDrawings.download}</ToolButton>
          </RightTools>
        </Toolbar>
        <Toolbar $width={369}>
          <ToolGrip />
          <ToolButton $on aria-label="Select">{paletteDrawings.pointer}</ToolButton>
          {PALETTE.map((group) => (
            <React.Fragment key={group[0]}>
              <ToolRule />
              {group.map((id) => (
                <ToolButton key={id} aria-label={id}>{paletteDrawings[id]}</ToolButton>
              ))}
            </React.Fragment>
          ))}
        </Toolbar>
      </ToolRow>
      <ToolRow $height={31}>
        <Toolbar $width={500}>
          <ToolGrip />
          {['db', 'globepage', 'globe', 'globe page', 'dbpage', 'page'].map((kind) => (
            <ToolButton key={kind} aria-label={kind}><NetDb kind={kind} /></ToolButton>
          ))}
        </Toolbar>
      </ToolRow>
    </>
  );
}

function Repository() {
  return (
    <Dock>
      <DockBar />
      <DockBar />
      <RepoTree>
        {repoRows.map((row) => (
          <RepoRow key={row.name}>
            {row.guides.map(([v, h, sign], i) => (
              <Guide key={i} $v={v} $h={h}>
                {sign && <Expander $indent={13} aria-label="Expand"><Sign plus={sign === '+'} /></Expander>}
              </Guide>
            ))}
            <RepoIcon $root={!row.guides.length}>{row.icon}</RepoIcon>
            <RepoName $active={row.active}>{row.name}</RepoName>
          </RepoRow>
        ))}
      </RepoTree>
    </Dock>
  );
}

const tasks = [
  { x: 853, y: 43, name: 'tsk_266' },
  { x: 853, y: 140, name: 'tsk_sas2sas_26...' },
  { x: 854, y: 248, name: 'tsk_flat2sas_266' },
  { x: 994, y: 44, name: 'tsk_sas2flat_266' },
];

function TaskDeveloper() {
  return (
    <MdiArea>
      <MdiChild>
        <ChildHead />
        <ChildView>
          <TaskCanvas>
            {tasks.map((t) => (
              <TaskNode key={t.name} $x={t.x} $y={t.y}>
                <SessionTask />
                <figcaption>{t.name}</figcaption>
              </TaskNode>
            ))}
            <TaskNode $x={998} $y={171}><figcaption>tsk_lnx_266</figcaption></TaskNode>
          </TaskCanvas>
          <VScroll>
            <Chevron dir="up" weight={1.8} />
            <Thumb $length={41} $margin="5px 0 0" />
            <Push />
            <Chevron weight={1.8} />
          </VScroll>
          <HScroll>
            <Push />
            <Chevron dir="right" weight={1.8} />
          </HScroll>
          <Corner />
        </ChildView>
      </MdiChild>
    </MdiArea>
  );
}

const PAGES = [
  ['First', 'M2.500 3V11M9.500 3V11L4.500 7Z'],
  ['Previous', 'M9 3V11L4 7Z'],
  ['Next', 'M5 3V11L10 7Z'],
  ['Last', 'M11.500 3V11M4.500 3V11L9.500 7Z'],
];

function OutputWindow() {
  const tabs = ['Save', 'Fetch Log', 'Validate', 'Copy', 'Integration Service', 'Notifications'];
  const state = (i) => (tabs[i] ? (i === 1 ? 'on' : 'off') : null);
  return (
    <Output>
      <OutputHandle>
        <TinyButton aria-label="Close output"><Close size={7} color="#000" weight={2.4} /></TinyButton>
        <TinyButton aria-label="Expand output"><Chevron dir="right" size={7} color="#999" /></TinyButton>
        <HandleBars />
      </OutputHandle>
      <OutputBody>
        <Log>
          <LogLine>{RULE}</LogLine>
          <LogLine><LogTime>3/18/2019 2:37:39 PM</LogTime></LogLine>
          <LogLine>{RULE}</LogLine>
          <LogLine />
          <LogLine>{RULE}</LogLine>
          <LogLine><LogTime>3/18/2019 2:38:23 PM</LogTime>Fetching session tsk_cars_sastoflat</LogLine>
          <LogLine>{RULE}</LogLine>
        </Log>
        <VScroll>
          <Chevron dir="up" weight={1.8} />
          <Thumb $length={66} $margin="10px 0 0" />
          <Push />
          <Chevron weight={1.8} />
        </VScroll>
        <TabStrip>
          <SheetTabs>
            {PAGES.map(([label, d]) => (
              <PageButton key={label} aria-label={label}>
                <Svg w={14}><path d={d} stroke="#999" fill="#999" /></Svg>
              </PageButton>
            ))}
            <Slant left={null} right="off" />
            {tabs.map((tab, i) => (
              <React.Fragment key={tab}>
                <SheetTab $on={i === 1}>{tab}</SheetTab>
                <Slant left={state(i)} right={state(i + 1)} />
              </React.Fragment>
            ))}
            <SheetRest />
          </SheetTabs>
          <BottomScroll>
            <Chevron dir="left" weight={1.8} />
            <Thumb $length={17} $margin="1px 0 1px 4px" />
            <Push />
            <Chevron dir="right" weight={1.8} />
          </BottomScroll>
        </TabStrip>
      </OutputBody>
    </Output>
  );
}

const NumberedFlag = ({ x }) => (
  <g>
    <path d={`M${x + 0.5} 60V115`} stroke="#000" />
    <path d={`M${x} 61L${x + 15} 67L${x} 72Z`} fill="#e07818" stroke="#a04c08" strokeWidth=".7" />
    <path d={`M${x} 72L${x + 15} 67L${x + 6} 67Z`} fill="#7c3a08" />
  </g>
);

function MappingDiagram() {
  return (
    <Diagram>
      <Wires width="390" height="150" viewBox="0 0 390 150" fill="none" aria-hidden="true">
        <defs>
          <pattern id="dither" width="2" height="2" patternUnits="userSpaceOnUse">
            <path d="M0 0H1V1H0ZM1 1H2V2H1Z" fill="#0a64b4" />
          </pattern>
          <pattern id="lightDither" width="2" height="2" patternUnits="userSpaceOnUse">
            <path d="M0 0H1V1H0ZM1 1H2V2H1Z" fill="#9a9a9a" />
          </pattern>
        </defs>
        <path d="M63 70.500H76" stroke="#bcbcfc" strokeWidth="5" />
        <path d="M63 70.500H83L137 101.500H150" stroke="#8080ff" />
        <path d="M144 96V107L154 101.500Z" fill="#9c9cff" />
        <path d="M193 101.500H206" stroke="#bcbcfc" strokeWidth="5" />
        <path d="M193 101.500H215L264 107.500H276" stroke="#8080ff" />
        <path d="M274 102V113L284 107.500Z" fill="#9c9cff" />

        <path d="M23.500 63.500L43 56L47.500 58V87L27 96.500L23.500 94Z" fill="#dfe6ff" stroke="#8c8ce0" />
        <path d="M24 66L44 58V63L24 72Z" fill="#7c80e8" />
        <path d="M28 70V95M33 68V92M38 66V90M43 64V88M24 77L47 68M24 83L47 74M24 89L47 80" stroke="#aab0f0" strokeWidth=".8" />
        <path d="M23.500 63.500L43 56L47.500 58V87L27 96.500L23.500 94Z" fill="url(#lightDither)" opacity=".5" />
        <path d="M39 71L50 66V60L62 68L53 80V76L41 80Z" fill="#f4c21c" stroke="#b07c10" />

        <NumberedFlag x={152} />
        <path d="M158 86L175 75L188 79V105L170 115L161 112Z" fill="#62b4ec" stroke="#2a6cc0" strokeWidth=".8" />
        <path d="M158 86L175 75L188 79V105L170 115L161 112Z" fill="url(#dither)" />
        <path d="M158 90L179 82V92L158 102Z" fill="#b8a00c" stroke="#7a6a00" strokeWidth=".7" />
        <path d="M161 98V92L164 91V97M161 95L164 94M167 96V89L170 88V91L167 93M173 93V87L176 86V89L173 90" stroke="#203c50" strokeWidth="1.300" />
        <path d="M179 98L175 99V102L179 101V105L175 106M182 97L186 96V102L182 104Z" stroke="#083c88" strokeWidth="1.400" />

        <NumberedFlag x={282} />
        <path d="M297.500 83L319 74.500L320.500 76V105L301 115L297.500 113Z" fill="#f2f4ff" stroke="#7c7ce4" />
        <path d="M298 84L320 76V81L298 89Z" fill="#8c90ee" />
        <path d="M303 84V113M308 82V110M314 80V108M298 96L320 88M298 102L320 94M298 108L320 100" stroke="#a0a4ee" strokeWidth=".8" />
        <path d="M284 104L297 98L294 92L307 98L302 110L299 105L287 112Z" fill="#58d41c" stroke="#207008" />
        <path d="M286 105L299 99L304 98" stroke="#b8f890" />
      </Wires>
      <Badge $x={171} $y={60}>5</Badge>
      <Badge $x={301} $y={60}>5</Badge>
      <NodeLabel $x={11} $y={98} $w={80}>CARSBIG2</NodeLabel>
      <NodeLabel $x={130} $y={117} $w={104} $on>SQ_CARSBIG2</NodeLabel>
      <NodeLabel $x={266} $y={119} $w={88}>flat_cars_sastofl<br />at</NodeLabel>
      <DiagramScroll>
        <Chevron dir="left" weight={1.8} />
        <Thumb $length={56} $margin="0 0 0 3px" />
        <Push />
      </DiagramScroll>
    </Diagram>
  );
}

function EditTasks() {
  const tabs = [['General', 50], ['Properties', 62], ['Config Object', 78], ['Mapping', 56], ['Components', 72], ['Metadata Extensions', 113]];
  return (
    <Dialog $x={131} $y={9} $w={655} $h={640} $edge="#a0a0a0" $depth={0.4} aria-label="Edit Tasks">
      <DialogCaption $h={30} $right={17} $dim>
        <DialogTitle>Edit Tasks</DialogTitle>
        <CaptionButtons $gap={34}>
          <CaptionButton aria-label="Minimize"><Dash $color="#e0e0e0" /></CaptionButton>
          <CaptionButton aria-label="Maximize"><Svg w={11}><path d="M.500 .500H10.500V10.500H.500Z" stroke="#777" /></Svg></CaptionButton>
          <CaptionButton aria-label="Close"><Close /></CaptionButton>
        </CaptionButtons>
      </DialogCaption>
      <PageTabs>
        {tabs.map(([name, w]) => (
          <PageTab key={name} $w={w} $on={name === 'Mapping'}>{name}</PageTab>
        ))}
      </PageTabs>
      <TabPage>
        <Fields>
          <label htmlFor="task">Select task:</label>
          <ComboWrap $h={23}>
            <TaskGear />
            <Combo id="task" $pad={22}><option>tsk_cars_sastoflat</option></Combo>
            <Chevron />
          </ComboWrap>
          <label htmlFor="taskType">Task type:</label>
          <ReadOnly id="taskType" readOnly value="Session (Reusable)" />
        </Fields>
        <Panes>
          <TreePane>
            <MapTree>
              {mapRows.map((row) => (
                <MapRow key={row.name}>
                  {row.branch && <Expander aria-label="Collapse"><Sign /></Expander>}
                  <MapIcon $leaf={row.leaf} $gap={row.leaf ? 36 : row.branch ? 7 : 16}>{row.icon}</MapIcon>
                  <MapName $on={row.on}>{row.name}</MapName>
                </MapRow>
              ))}
            </MapTree>
            <FootTabs>
              <FootTab $w={83}>
                <Svg w={15}>
                  <path d="M4 7.500H6M6 3.500V11.500M9 3.500H11M9 7.500H11M9 11.500H11" stroke="#333" />
                  <path d="M.500 6H3.500V9H.500ZM5.500 1.500H8.500V4.500H5.500ZM5.500 6H8.500V9H5.500ZM5.500 10.500H8.500V13.500H5.500ZM10.500 6H13.500V9H10.500ZM10.500 10.500H13.500V13.500H10.500Z" fill="#a8dcff" stroke="#1068c0" />
                  <path d="M10.500 1.500H13.500V4.500H10.500Z" fill="#ffe080" stroke="#a07000" />
                </Svg>
                Transfo...
              </FootTab>
              <FootTab $w={74} $on>
                <Svg w={15} h={12}>
                  <path d="M0 0L15 6L0 6Z" fill="#f0f000" />
                  <path d="M0 12L15 6L0 6Z" fill="#808000" />
                  <path d="M0 0L4 6L0 12Z" fill="#c0c000" />
                </Svg>
                Partitions
              </FootTab>
            </FootTabs>
          </TreePane>
          <MapPane>
            <MapHeading>map_cars_sastoflat.SQ_CARSBIG2</MapHeading>
            <PointBar>
              <PointButton $w={117} $gap={3} disabled><NewBox off /><span><u>A</u>dd Partition Point</span></PointButton>
              <PointButton $w={132} $gap={5}><RedX /><span><u>D</u>elete Partition Point</span></PointButton>
              <PointButton $w={128} $gap={8}><Pencil /><span><u>E</u>dit Partition Point</span></PointButton>
              <PointButton $w={60} $gap={0} aria-label="View" />
            </PointBar>
            <MappingDiagram />
            <PaneRule />
            <Detail><b>SQ_CARSBIG2</b><span>5 Pass Through partition(s)</span></Detail>
          </MapPane>
        </Panes>
      </TabPage>
      <DialogButtons $gap={8} $pad="9px 7px 7px 0">
        <PushButton $w={73}>OK</PushButton>
        <PushButton $w={73}>Cancel</PushButton>
        <PushButton $w={73} disabled>Apply</PushButton>
        <PushButton $w={73}>Help</PushButton>
      </DialogButtons>
      <ResizeCorner><Grip /></ResizeCorner>
    </Dialog>
  );
}

function EditPartitionPoint() {
  return (
    <Dialog $x={715} $y={137} $w={383} $h={432} $edge="#cf509c" $depth={0.45} aria-label="Edit Partition Point">
      <DialogCaption $h={30} $right={9}>
        <Svg w={15} h={13}>
          <path d="M.500 .500H14.500V12.500H.500Z" fill="#e8eef2" stroke="#a8b0b4" />
          <path d="M2 2H7V11H2Z" fill="#3f7f8c" />
          <path d="M9 2H13V11H9Z" fill="#fff" />
        </Svg>
        <DialogTitle>Edit Partition Point - SQ_CARSBIG2</DialogTitle>
        <CaptionButton aria-label="Close"><Close color="#000" /></CaptionButton>
      </DialogCaption>
      <PartHead>
        Partitions:
        <FlatButton $gap={10} $before="auto" $focus><NewBox /><span><u>A</u>dd</span></FlatButton>
        <FlatButton $gap={3} $before="31px"><RedX /><span><u>D</u>elete</span></FlatButton>
      </PartHead>
      <GridBox>
        <Grid>
          <colgroup><col /><col /></colgroup>
          <thead><tr><th scope="col">Name</th><th scope="col">Description</th></tr></thead>
          <tbody>
            {[1, 2, 3, 4, 5].map((n) => (
              <tr key={n}><td>Partition #{n}</td><td /></tr>
            ))}
          </tbody>
        </Grid>
      </GridBox>
      <Group>
        <legend>Partition Type</legend>
        <Warning>Warning: The partition attributes will be deleted if you change the partition type.</Warning>
        <TypeField>
          <label htmlFor="ptype">Select Partition Type:</label>
          <ComboWrap $h={21} $w="189px">
            <Combo id="ptype" $pad={2}><option>Pass Through</option></Combo>
            <Chevron />
          </ComboWrap>
        </TypeField>
      </Group>
      <DialogButtons $gap={14} $pad="17px 7px 6px 0">
        <PushButton $w={79}>OK</PushButton>
        <PushButton $w={79}>Cancel</PushButton>
        <PushButton $w={79}>Help</PushButton>
      </DialogButtons>
      <ResizeCorner><Grip /></ResizeCorner>
    </Dialog>
  );
}

export default function App() {
  return (
    <>
      <GlobalStyle />
      <Frame>
        <CaptionBar>
          <Logo />
          <CaptionTitle>{WINDOW_TITLE}</CaptionTitle>
          <CaptionButtons $gap={33}>
            <CaptionButton aria-label="Minimize"><Dash $color="#777" /></CaptionButton>
            <CaptionButton aria-label="Restore"><Restore /></CaptionButton>
            <CaptionButton aria-label="Close"><Close /></CaptionButton>
          </CaptionButtons>
        </CaptionBar>
        <MenuBar>
          <GearMini />
          <MenuItem $first>Repository</MenuItem>
          <MenuItem>Edit</MenuItem>
          <MdiButtons>
            <MdiButton aria-label="Minimize"><Svg w={8}><path d="M1 7H7" stroke="currentColor" strokeWidth="2" /></Svg></MdiButton>
            <MdiButton aria-label="Restore"><Svg w={9}><path d="M.500 4H6.500V8.500H.500ZM2.500 3V1H8.500V6H7" stroke="currentColor" strokeWidth="1.300" /></Svg></MdiButton>
            <MdiButton aria-label="Close"><Svg w={8}><path d="M1 1L7 7M7 1L1 7" stroke="currentColor" strokeWidth="2" /></Svg></MdiButton>
          </MdiButtons>
        </MenuBar>
        <MainToolbars />
        <Workspace>
          <Repository />
          <TaskDeveloper />
        </Workspace>
        <OutputWindow />
        <StatusBar>
          <StatusPane $flex="1" $after={7} />
          <StatusPane $flex="0 0 29px" />
          <StatusPane $flex="0 0 33px" />
          <StatusPane $flex="0 0 32px" />
        </StatusBar>
        <EditTasks />
        <EditPartitionPoint />
      </Frame>
    </>
  );
}
